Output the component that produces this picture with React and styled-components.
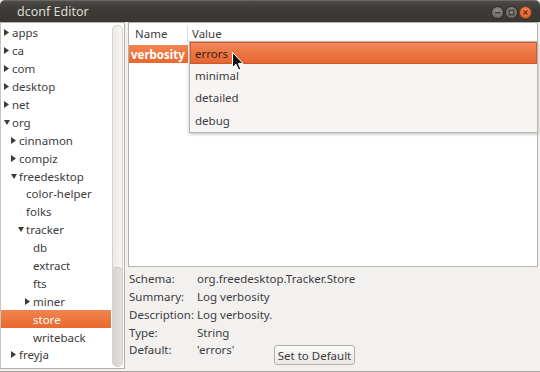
import styled, { createGlobalStyle } from 'styled-components'

const GlobalStyle = createGlobalStyle`
  html, body {
    margin: 0;
    padding: 0;
  }
  body {
    background: #f2f1f0;
    font-family: "Noto Sans", "DejaVu Sans", sans-serif;
    font-size: 11.5px;
    color: #3c3c3c;
  }
`

// WINDOW

const Window = styled.div`
  position: relative;
  width: 540px;
  height: 372px;
  display: flex;
  flex-direction: column;
  background: #f2f1f0;
  overflow: hidden;
`

const TitleBar = styled.div`
  flex: none;
  height: 22px;
  display: flex;
  align-items: center;
  justify-content: space-between;
  padding: 0 9px 0 17px;
  background: linear-gradient(#4c4b46, #3c3b37 40%, #383733);
  border-top: 1px solid #6a6963;
  border-radius: 5px 5px 0 0;
  box-sizing: border-box;
  color: #dfdbd2;
  font-size: 12.5px;
`

const Controls = styled.div`
  display: flex;
  gap: 3px;
  padding-top: 1px;
`

const CtrlButton = styled.div`
  width: 11px;
  height: 11px;
  border-radius: 50%;
  display: flex;
  align-items: center;
  justify-content: center;
  background: ${({ close }) =>
    close
      ? 'radial-gradient(circle at 50% 35%, #f58a5a, #df4f1d)'
      : 'radial-gradient(circle at 50% 35%, #8f8d87, #615f5a)'};
  box-shadow: 0 0 0 1px ${({ close }) => (close ? '#8a3a1a' : '#2f2e2a')};
`

function WindowControls() {
  return (
    <Controls>
      <CtrlButton>
        <svg width="7" height="7" viewBox="0 0 7 7">
          <rect x="1" y="3" width="5" height="1.4" fill="#3a3935" />
        </svg>
      </CtrlButton>
      <CtrlButton>
        <svg width="7" height="7" viewBox="0 0 7 7">
          <rect x="1.2" y="1.2" width="4.6" height="4.6" fill="none" stroke="#3a3935" strokeWidth="1.2" />
        </svg>
      </CtrlButton>
      <CtrlButton close>
        <svg width="7" height="7" viewBox="0 0 7 7">
          <path d="M1.5 1.5 L5.5 5.5 M5.5 1.5 L1.5 5.5" stroke="#7a2a10" strokeWidth="1.3" />
        </svg>
      </CtrlButton>
    </Controls>
  )
}

const Body = styled.div`
  flex: 1;
  display: flex;
  gap: 3px;
  padding: 0 2px 2px 0;
  border-bottom: 1px solid #a9a6a1;
  min-height: 0;
`

// LEFT TREE

const LeftPane = styled.div`
  flex: none;
  width: 125px;
  box-sizing: border-box;
  display: flex;
  background: #ffffff;
  border: 1px solid #b4b1ab;
  border-left-color: #c9c6c1;
`

const TreeList = styled.div`
  flex: 1;
  padding-top: 1px;
  overflow: hidden;
`

const TreeRow = styled.div`
  height: 17.9px;
  display: flex;
  align-items: center;
  padding-left: ${({ level }) => 3 + level * 7}px;
  background: ${({ selected }) => (selected ? 'linear-gradient(#f2844f, #e8682f)' : 'transparent')};
  color: ${({ selected }) => (selected ? '#ffffff' : '#3c3c3c')};
  white-space: nowrap;
`

const Expander = styled.span`
  flex: none;
  width: 8px;
  display: flex;
  align-items: center;
`

const Scrollbar = styled.div`
  flex: none;
  width: 9px;
  margin: 2px 1px 1px 1px;
  display: flex;
  flex-direction: column;
  justify-content: flex-end;
  background: linear-gradient(90deg, #ebeae7, #f7f6f4);
  border: 1px solid #d4d1cc;
  border-radius: 5px;
`

const Thumb = styled.div`
  height: 98px;
  border-radius: 4px;
  background: linear-gradient(90deg, #d6d3ce, #e3e1dd);
  border-top: 1px solid #c6c3be;
`

function Arrow({ open }) {
  return open ? (
    <svg width="6" height="5" viewBox="0 0 6 5">
      <path d="M0 0 L6 0 L3 5 Z" fill="#3c3c3c" />
    </svg>
  ) : (
    <svg width="5" height="7" viewBox="0 0 5 7">
      <path d="M0 0 L5 3.5 L0 7 Z" fill="#3c3c3c" />
    </svg>
  )
}

const tree = [
  { name: 'apps', level: 0, kids: true },
  { name: 'ca', level: 0, kids: true },
  { name: 'com', level: 0, kids: true },
  { name: 'desktop', level: 0, kids: true },
  { name: 'net', level: 0, kids: true },
  { name: 'org', level: 0, kids: true, open: true },
  { name: 'cinnamon', level: 1, kids: true },
  { name: 'compiz', level: 1, kids: true },
  { name: 'freedesktop', level: 1, kids: true, open: true },
  { name: 'color-helper', level: 2 },
  { name: 'folks', level: 2 },
  { name: 'tracker', level: 2, kids: true, open: true },
  { name: 'db', level: 3 },
  { name: 'extract', level: 3 },
  { name: 'fts', level: 3 },
  { name: 'miner', level: 3, kids: true },
  { name: 'store', level: 3, selected: true },
  { name: 'writeback', level: 3 },
  { name: 'freyja', level: 1, kids: true },
]

// RIGHT SIDE

const RightColumn = styled.div`
  flex: 1;
  display: flex;
  flex-direction: column;
  min-width: 0;
`

const KeyTable = styled.div`
  flex: none;
  height: 245px;
  box-sizing: border-box;
  background: #ffffff;
  border: 1px solid #b4b1ab;
`

const HeaderRow = styled.div`
  height: 22px;
  display: flex;
  align-items: center;
`

const HeaderCell = styled.div`
  width: ${({ w }) => (w ? w + 'px' : 'auto')};
  flex: ${({ w }) => (w ? 'none' : '1')};
  box-sizing: border-box;
  padding-left: ${({ pad }) => pad}px;
  border-right: ${({ w }) => (w ? '1px solid #dcdad5' : 'none')};
  line-height: 16px;
`

const KeyRow = styled.div`
  height: 18px;
  display: flex;
  align-items: center;
`

const NameCell = styled.div`
  width: 59px;
  height: 100%;
  display: flex;
  align-items: center;
  padding-left: 2px;
  box-sizing: border-box;
  background: linear-gradient(#f2844f, #e8682f);
  color: #ffffff;
  font-weight: bold;
`

const Info = styled.div`
  padding: 3px 0 0 1px;
`

const InfoRow = styled.div`
  height: 17.75px;
  display: flex;
  align-items: center;
`

const Label = styled.span`
  flex: none;
  width: 68px;
`

const Value = styled.span`
  flex: none;
  width: ${({ w }) => (w ? w + 'px' : 'auto')};
`

const DefaultButton = styled.button`
  align-self: flex-start;
  margin-top: 4px;
  width: 81px;
  height: 20px;
  padding: 0;
  border: 1px solid #b3b0aa;
  border-radius: 3px;
  background: linear-gradient(#fcfcfb, #ebe9e6);
  font-family: inherit;
  font-size: 11.5px;
  color: #3c3c3c;
`

// POPUP MENU

const Popup = styled.div`
  position: absolute;
  left: 189px;
  top: 41px;
  width: 349px;
  box-sizing: border-box;
  background: #f6f5f4;
  border: 1px solid #bab7b2;
  box-shadow: 0 1px 3px rgba(0, 0, 0, 0.28);
`

const PopupItem = styled.div`
  height: 22.4px;
  display: flex;
  align-items: center;
  padding-left: 5px;
  box-sizing: border-box;
  background: ${({ active }) => (active ? 'linear-gradient(#f48a5b, #e5632f)' : 'transparent')};
  box-shadow: ${({ active }) => (active ? 'inset 0 0 0 1px #c95a2c' : 'none')};
  color: ${({ active }) => (active ? '#3a2116' : '#3c3c3c')};
`

const Pointer = styled.svg`
  position: absolute;
  left: 232px;
  top: 52px;
`

export default function App() {
  return (
    <>
      <GlobalStyle />
      <Window>
        <TitleBar>
          <span>dconf Editor</span>
          <WindowControls />
        </TitleBar>
        <Body>
          <LeftPane>
            <TreeList>
              {tree.map((n) => (
                <TreeRow key={n.name} level={n.level} selected={n.selected}>
                  <Expander>{n.kids && <Arrow open={n.open} />}</Expander>
                  {n.name}
                </TreeRow>
              ))}
            </TreeList>
            <Scrollbar>
              <Thumb />
            </Scrollbar>
          </LeftPane>
          <RightColumn>
            <KeyTable>
              <HeaderRow>
                <HeaderCell w={59} pad={6}>Name</HeaderCell>
                <HeaderCell pad={4}>Value</HeaderCell>
              </HeaderRow>
              <KeyRow>
                <NameCell>verbosity</NameCell>
              </KeyRow>
            </KeyTable>
            <Info>
              <InfoRow>
                <Label>Schema:</Label>
                <Value>org.freedesktop.Tracker.Store</Value>
              </InfoRow>
              <InfoRow>
                <Label>Summary:</Label>
                <Value>Log verbosity</Value>
              </InfoRow>
              <InfoRow>
                <Label>Description:</Label>
                <Value>Log verbosity.</Value>
              </InfoRow>
              <InfoRow>
                <Label>Type:</Label>
                <Value>String</Value>
              </InfoRow>
              <InfoRow>
                <Label>Default:</Label>
                <Value w={77}>'errors'</Value>
                <DefaultButton>Set to Default</DefaultButton>
              </InfoRow>
            </Info>
          </RightColumn>
        </Body>
        <Popup>
          <PopupItem active>errors</PopupItem>
          <PopupItem>minimal</PopupItem>
          <PopupItem>detailed</PopupItem>
          <PopupItem>debug</PopupItem>
        </Popup>
        <Pointer width="12" height="19" viewBox="0 0 12 19">
          <path d="M0.5 0.5 L0.5 15.5 L4 12.2 L6.6 18 L8.8 17 L6.3 11.4 L11 11.4 Z" fill="#111" stroke="#fff" strokeWidth="1" />
        </Pointer>
      </Window>
    </>
  )
}
